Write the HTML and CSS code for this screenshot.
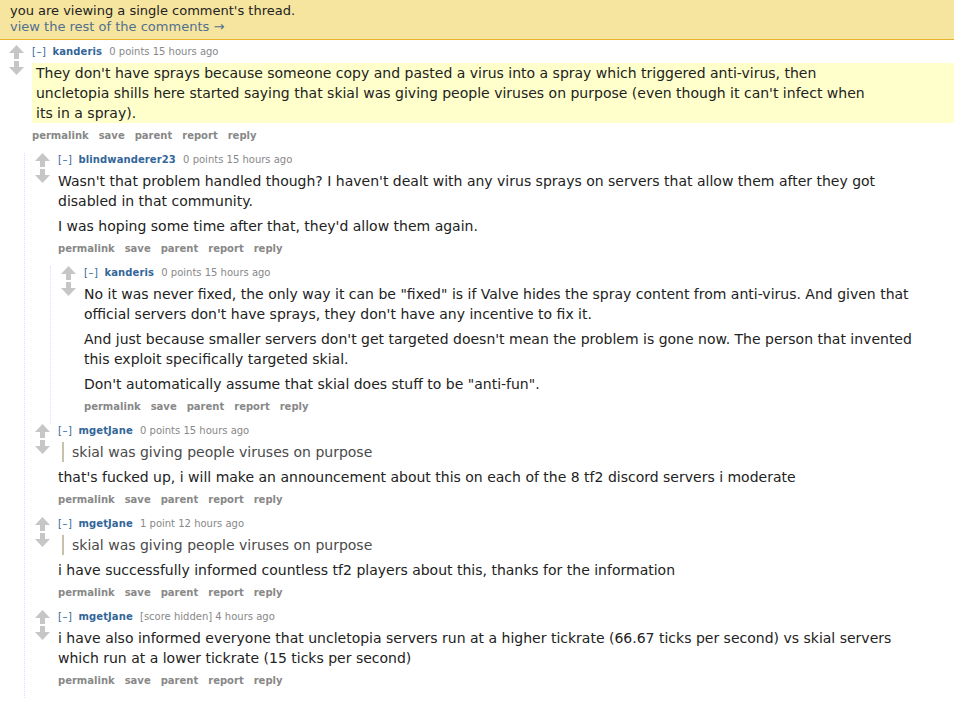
FILE: index.html
```html
<!DOCTYPE html>
<html>
<head>
<meta charset="utf-8">
<link rel="stylesheet" href="styles.css">
</head>
<body>
<div class="banner">
  <div>you are viewing a single comment's thread.</div>
  <a class="banner-link" href="#">view the rest of the comments →</a>
</div>

<div class="thread">
  <div class="comment">
    <div class="row">
      <div class="midcol">
        <svg class="arrow" viewBox="0 0 15 14"><polygon points="7.5,0 15,8 10,8 10,14 5,14 5,8 0,8"/></svg>
        <svg class="arrow" viewBox="0 0 15 14"><polygon points="7.5,14 15,6 10,6 10,0 5,0 5,6 0,6"/></svg>
      </div>
      <div class="entry">
        <div class="tagline"><a class="expand">[–]</a> <a class="author">kanderis</a> <span class="score">0 points 15 hours ago</span></div>
        <div class="body highlight">
          <div class="md"><p>They don't have sprays because someone copy and pasted a virus into a spray which triggered anti-virus, then uncletopia shills here started saying that skial was giving people viruses on purpose (even though it can't infect when its in a spray).</p></div>
        </div>
        <ul class="buttons"><li>permalink</li><li>save</li><li>parent</li><li>report</li><li>reply</li></ul>
      </div>
    </div>

    <div class="child">
      <div class="comment">
        <div class="row">
          <div class="midcol">
            <svg class="arrow" viewBox="0 0 15 14"><polygon points="7.5,0 15,8 10,8 10,14 5,14 5,8 0,8"/></svg>
            <svg class="arrow" viewBox="0 0 15 14"><polygon points="7.5,14 15,6 10,6 10,0 5,0 5,6 0,6"/></svg>
          </div>
          <div class="entry">
            <div class="tagline"><a class="expand">[–]</a> <a class="author">blindwanderer23</a> <span class="score">0 points 15 hours ago</span></div>
            <div class="body">
              <div class="md">
                <p>Wasn't that problem handled though? I haven't dealt with any virus sprays on servers that allow them after they got disabled in that community.</p>
                <p>I was hoping some time after that, they'd allow them again.</p>
              </div>
            </div>
            <ul class="buttons"><li>permalink</li><li>save</li><li>parent</li><li>report</li><li>reply</li></ul>
          </div>
        </div>

        <div class="child">
          <div class="comment">
            <div class="row">
              <div class="midcol">
                <svg class="arrow" viewBox="0 0 15 14"><polygon points="7.5,0 15,8 10,8 10,14 5,14 5,8 0,8"/></svg>
                <svg class="arrow" viewBox="0 0 15 14"><polygon points="7.5,14 15,6 10,6 10,0 5,0 5,6 0,6"/></svg>
              </div>
              <div class="entry">
                <div class="tagline"><a class="expand">[–]</a> <a class="author">kanderis</a> <span class="score">0 points 15 hours ago</span></div>
                <div class="body">
                  <div class="md">
                    <p>No it was never fixed, the only way it can be "fixed" is if Valve hides the spray content from anti-virus. And given that official servers don't have sprays, they don't have any incentive to fix it.</p>
                    <p>And just because smaller servers don't get targeted doesn't mean the problem is gone now. The person that invented this exploit specifically targeted skial.</p>
                    <p>Don't automatically assume that skial does stuff to be "anti-fun".</p>
                  </div>
                </div>
                <ul class="buttons"><li>permalink</li><li>save</li><li>parent</li><li>report</li><li>reply</li></ul>
              </div>
            </div>
          </div>
        </div>
      </div>

      <div class="comment">
        <div class="row">
          <div class="midcol">
            <svg class="arrow" viewBox="0 0 15 14"><polygon points="7.5,0 15,8 10,8 10,14 5,14 5,8 0,8"/></svg>
            <svg class="arrow" viewBox="0 0 15 14"><polygon points="7.5,14 15,6 10,6 10,0 5,0 5,6 0,6"/></svg>
          </div>
          <div class="entry">
            <div class="tagline"><a class="expand">[–]</a> <a class="author">mgetJane</a> <span class="score">0 points 15 hours ago</span></div>
            <div class="body">
              <div class="md">
                <blockquote>skial was giving people viruses on purpose</blockquote>
                <p>that's fucked up, i will make an announcement about this on each of the 8 tf2 discord servers i moderate</p>
              </div>
            </div>
            <ul class="buttons"><li>permalink</li><li>save</li><li>parent</li><li>report</li><li>reply</li></ul>
          </div>
        </div>
      </div>

      <div class="comment">
        <div class="row">
          <div class="midcol">
            <svg class="arrow" viewBox="0 0 15 14"><polygon points="7.5,0 15,8 10,8 10,14 5,14 5,8 0,8"/></svg>
            <svg class="arrow" viewBox="0 0 15 14"><polygon points="7.5,14 15,6 10,6 10,0 5,0 5,6 0,6"/></svg>
          </div>
          <div class="entry">
            <div class="tagline"><a class="expand">[–]</a> <a class="author">mgetJane</a> <span class="score">1 point 12 hours ago</span></div>
            <div class="body">
              <div class="md">
                <blockquote>skial was giving people viruses on purpose</blockquote>
                <p>i have successfully informed countless tf2 players about this, thanks for the information</p>
              </div>
            </div>
            <ul class="buttons"><li>permalink</li><li>save</li><li>parent</li><li>report</li><li>reply</li></ul>
          </div>
        </div>
      </div>

      <div class="comment">
        <div class="row">
          <div class="midcol">
            <svg class="arrow" viewBox="0 0 15 14"><polygon points="7.5,0 15,8 10,8 10,14 5,14 5,8 0,8"/></svg>
            <svg class="arrow" viewBox="0 0 15 14"><polygon points="7.5,14 15,6 10,6 10,0 5,0 5,6 0,6"/></svg>
          </div>
          <div class="entry">
            <div class="tagline"><a class="expand">[–]</a> <a class="author">mgetJane</a> <span class="score">[score hidden] 4 hours ago</span></div>
            <div class="body">
              <div class="md">
                <p>i have also informed everyone that uncletopia servers run at a higher tickrate (66.67 ticks per second) vs skial servers which run at a lower tickrate (15 ticks per second)</p>
              </div>
            </div>
            <ul class="buttons"><li>permalink</li><li>save</li><li>parent</li><li>report</li><li>reply</li></ul>
          </div>
        </div>
      </div>
    </div>
  </div>
</div>
</body>
</html>
```

FILE: styles.css
```css
* { box-sizing: border-box; }
html, body { margin: 0; padding: 0; background: #fff; }
body {
  font-family: "DejaVu Sans", Verdana, sans-serif;
  color: #222;
  width: 954px;
  overflow: hidden;
}
a { text-decoration: none; cursor: pointer; }

.banner {
  background: #f6e59f;
  border-bottom: 1px solid #eab12d;
  padding: 3px 10px 5px;
  font-size: 13px;
  line-height: 16px;
  height: 40px;
}
.banner-link { color: #51708f; }

.thread { padding-top: 5px; padding-left: 9px; }

.row { display: flex; align-items: flex-start; padding-bottom: 10px; }
.midcol {
  width: 23px;
  flex: none;
  display: flex;
  flex-direction: column;
  gap: 2px;
}
.arrow { width: 15px; height: 14px; fill: #c6c6c6; display: block; }
.entry { flex: 1; min-width: 0; }

.tagline {
  font-size: 10px;
  line-height: 14px;
  color: #888;
  white-space: nowrap;
}
.expand { color: #369; margin-right: 3px; letter-spacing: 0.5px; }
.author { color: #369; font-weight: bold; margin-right: 4px; letter-spacing: 0.1px; }

.body { margin-top: 4px; }
.body.highlight { background: #ffc; padding: 0 4px; }
.md { max-width: 840px; font-size: 14px; line-height: 20px; color: #222; }
.md p { margin: 0; }
.md p + p, .md blockquote + p { margin-top: 5px; }
.md blockquote {
  margin: 0 0 0 4px;
  border-left: 2px solid #c5c1ad;
  padding-left: 8px;
  color: #4a4a4a;
}

.buttons {
  list-style: none;
  margin: 6px 0 0;
  padding: 0;
  display: flex;
  gap: 10px;
  font-size: 10px;
  line-height: 14px;
  font-weight: bold;
  color: #888;
}

.child {
  margin-left: 15px;
  border-left: 1px dotted #ddf;
  padding-left: 10px;
}
```
